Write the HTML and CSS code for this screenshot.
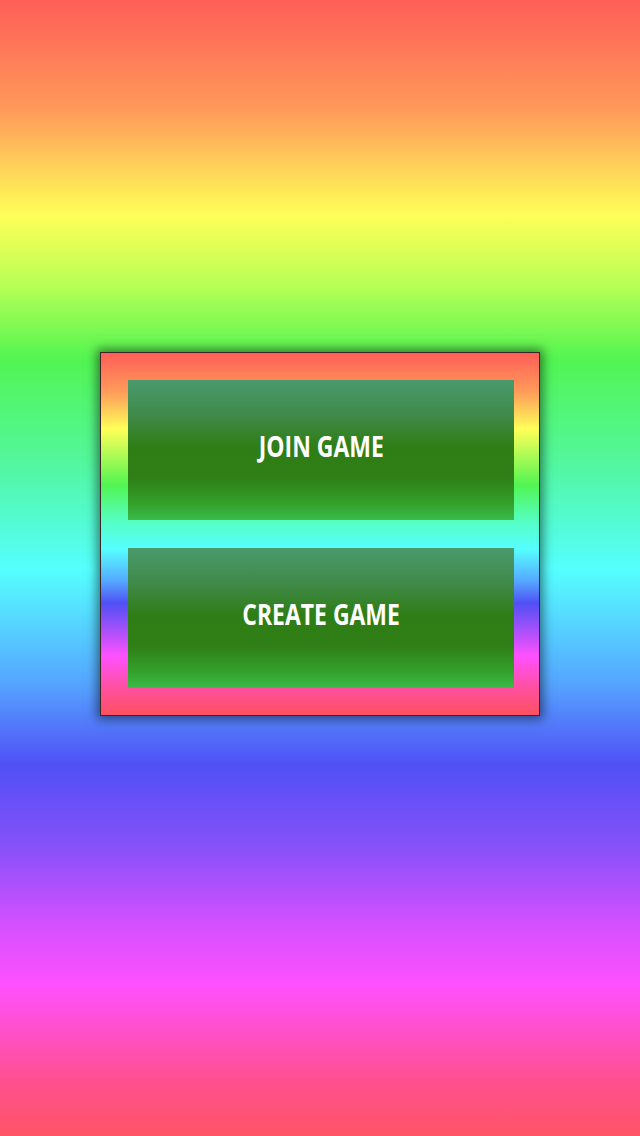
FILE: index.html
```html
<!DOCTYPE html>
<html>
<head>
<meta charset="utf-8">
<link rel="stylesheet" href="styles.css">
</head>
<body>
<div class="screen">
  <div class="panel">
    <button class="btn"><span class="label">JOIN GAME</span></button>
    <button class="btn"><span class="label">CREATE GAME</span></button>
  </div>
</div>
</body>
</html>
```

FILE: styles.css
```css
html, body {
  margin: 0;
  padding: 0;
}
.screen {
  width: 640px;
  height: 1136px;
  box-sizing: border-box;
  padding-top: 352px;
  display: flex;
  flex-direction: column;
  align-items: center;
  background: linear-gradient(to bottom,
    #ff5e58 0px,
    #ff9a5a 110px,
    #ffff58 215px,
    #b8ff55 285px,
    #52f552 360px,
    #52f7a0 465px,
    #55ffff 570px,
    #55a8ff 680px,
    #5050f5 765px,
    #8a50fa 850px,
    #d050ff 920px,
    #ff50ff 985px,
    #ff5090 1080px,
    #ff5466 1136px);
}
.panel {
  width: 440px;
  box-sizing: border-box;
  border: 1px solid #3a2626;
  padding: 27px 25px 27px 27px;
  display: flex;
  flex-direction: column;
  gap: 28px;
  box-shadow: 0 0 10px 3px rgba(0, 0, 0, 0.5);
  background: linear-gradient(to bottom,
    #ff5e58 0px,
    #ff9a5a 38px,
    #ffff58 76px,
    #52f552 132px,
    #55ffc8 170px,
    #55ffff 196px,
    #55a8ff 228px,
    #5050f5 250px,
    #a050fa 275px,
    #ff50ff 303px,
    #ff50a0 335px,
    #ff5060 362px);
}
.btn {
  display: flex;
  align-items: center;
  justify-content: center;
  height: 140px;
  width: 100%;
  border: none;
  padding: 0 0 8px 0;
  margin: 0;
  background: linear-gradient(to bottom,
    #4a9a6c 0%,
    #3f8a4a 25%,
    #2f7d15 48%,
    #2f7f16 70%,
    #33a02a 88%,
    #3abb48 100%);
}
.label {
  display: inline-block;
  font-family: "Open Sans", "Noto Sans", sans-serif;
  font-weight: 700;
  font-size: 28px;
  line-height: 30px;
  color: #ffffff;
  transform: scaleX(0.82);
}
```
